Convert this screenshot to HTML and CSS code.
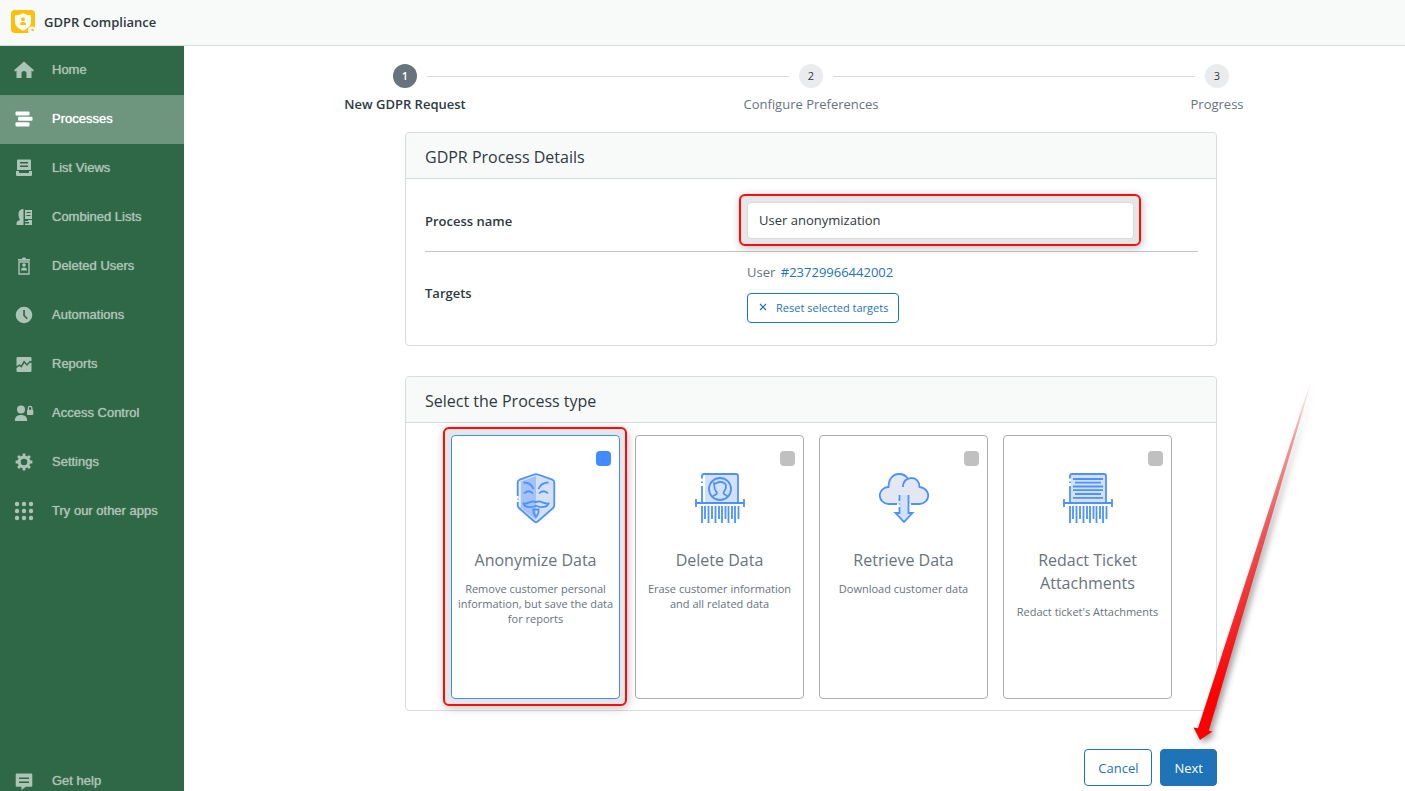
FILE: index.html
```html
<!DOCTYPE html>
<html lang="en">
<head>
    <meta charset="UTF-8">
    <meta name="viewport" content="width=device-width, initial-scale=1.0">
    <title>GDPR Compliance</title>
    <link rel="stylesheet" href="styles.css">
</head>
<body>
    <header class="topbar">
        <svg class="logo" viewBox="0 0 24 24">
            <rect width="24" height="23" rx="4" fill="#fcc107"/>
            <path d="M12 3c2 1.500 5 2.300 8 2.300v6.700c0 4-3.500 6.700-8 8.500c-4.500-1.800-8-4.500-8-8.500V5.300C7 5.300 10 4.500 12 3z" fill="#fff"/>
            <circle cx="12" cy="9.200" r="1.900" fill="#fcc107"/>
            <path d="M9 15v-1.500l1.700-1.500h2.600l1.700 1.500V15z" fill="#fcc107"/>
            <circle cx="21" cy="20.500" r="4" fill="#f8f9f9"/>
            <path d="M20.500 18.500v2.500h2.500a2.500 2.500 0 0 0-2.500-2.500z" fill="#fcc107"/>
        </svg>
        <span class="app-name">GDPR Compliance</span>
    </header>

    <div class="layout">
        <nav class="sidebar">
            <a href="#" class="nav-item">
                <svg viewBox="0 0 20 20"><path d="M10 1.500L20 10.200l-1.200 1.200-1.300-.6V18h-5v-4.500a2.500 2.500 0 0 0-5 0V18h-5v-7.200l-1.300.6L0 10.200z"/></svg>
                Home
            </a>
            <a href="#" class="nav-item active">
                <svg viewBox="0 0 20 20"><rect x="1.500" y="2.500" width="14" height="4" rx="1"/><rect x="4" y="7.800" width="14.500" height="4" rx="1"/><rect x="1.500" y="13.200" width="14" height="4.300" rx="1"/></svg>
                Processes
            </a>
            <a href="#" class="nav-item">
                <svg viewBox="0 0 20 20"><path fill-rule="evenodd" d="M4 1.500h12a1 1 0 0 1 1 1V12H3V2.500a1 1 0 0 1 1-1zM6 4v1.500h8V4zm0 3.500V9h8V7.500z"/><path d="M2 13h3v2h10v-2h3v4a1 1 0 0 1-1 1H3a1 1 0 0 1-1-1z"/></svg>
                List Views
            </a>
            <a href="#" class="nav-item">
                <svg viewBox="0 0 20 20"><path d="M9.500 2v16H2.500v-1.800c0-1.700 1.500-2.500 3.500-3.200C5 11 4.500 9.500 4.500 7c0-3 2-5 5-5z"/><path fill-rule="evenodd" d="M11 3h7v9h-7zM12.500 5v1h4V5zm0 3v1h4V8z"/><path d="M11 14h3v-1h4v5h-7v-1.500h4V15h-4z"/></svg>
                Combined Lists
            </a>
            <a href="#" class="nav-item">
                <svg viewBox="0 0 20 20"><path d="M4 3h4l.7-1.500h2.600L12 3h4v1.700H4z"/><path d="M5 6h10v12H5z" fill="none" stroke="currentColor" stroke-width="1.400"/><circle cx="10" cy="9" r="1.800"/><path d="M7 14.500c0-2 1-3 3-3s3 1 3 3z"/></svg>
                Deleted Users
            </a>
            <a href="#" class="nav-item">
                <svg viewBox="0 0 20 20"><path fill-rule="evenodd" d="M10 1.700a8.300 8.300 0 1 0 0 16.600a8.300 8.300 0 0 0 0-16.600zM9.200 5h1.700v5.200l2.900 3-1.200 1.100-3.400-3.500z"/></svg>
                Automations
            </a>
            <a href="#" class="nav-item">
                <svg viewBox="0 0 20 20"><path d="M3.500 3h13a1 1 0 0 1 1 1v3.200L15.800 6.700 13 10l-3-3.500-3 5-1.500-1.200-3 2V4a1 1 0 0 1 1-1z"/><path d="M2.500 14l3-2 2 1.700L10.300 9 13 12l3-3.500 1.500.5v8a1 1 0 0 1-1 1h-13a1 1 0 0 1-1-1z"/></svg>
                Reports
            </a>
            <a href="#" class="nav-item">
                <svg viewBox="0 0 20 20"><circle cx="7" cy="6.500" r="4"/><path d="M.8 18c0-4 2.200-6 6.200-6s6.200 2 6.200 6z"/><rect x="13" y="6.800" width="6.300" height="5.200" rx=".8"/><path d="M14.300 7V5.200a1.800 1.800 0 0 1 3.600 0V7" fill="none" stroke="currentColor" stroke-width="1.300"/></svg>
                Access Control
            </a>
            <a href="#" class="nav-item">
                <svg viewBox="0 0 20 20"><circle cx="10" cy="10" r="4.900" fill="none" stroke="currentColor" stroke-width="3.200"/><path d="M10 1.600v3M10 15.400v3M1.600 10h3M15.400 10h3M4.060 4.060l2 2M13.940 13.940l2 2M4.060 15.940l2-2M13.940 6.060l2-2" stroke="currentColor" stroke-width="2.800"/></svg>
                Settings
            </a>
            <a href="#" class="nav-item">
                <svg viewBox="0 0 20 20"><circle cx="3" cy="3" r="2.200"/><circle cx="10" cy="3" r="2.200"/><circle cx="17" cy="3" r="2.200"/><circle cx="3" cy="10" r="2.200"/><circle cx="10" cy="10" r="2.200"/><circle cx="17" cy="10" r="2.200"/><circle cx="3" cy="17" r="2.200"/><circle cx="10" cy="17" r="2.200"/><circle cx="17" cy="17" r="2.200"/></svg>
                Try our other apps
            </a>
            <a href="#" class="nav-item help">
                <svg viewBox="0 0 20 20"><path fill-rule="evenodd" d="M2.700 2.500h14.600a1 1 0 0 1 1 1v11.300a1 1 0 0 1-1 1h-5.500L7.500 19v-3.200H2.700a1 1 0 0 1-1-1V3.500a1 1 0 0 1 1-1zM5 6.500V8h10V6.500zm0 4V12h10v-1.500z"/></svg>
                Get help
            </a>
        </nav>

        <main class="content">
            <div class="stepper">
                <div class="step current">
                    <span class="step-number">1</span>
                    <span class="step-label">New GDPR Request</span>
                </div>
                <div class="step-line"></div>
                <div class="step">
                    <span class="step-number">2</span>
                    <span class="step-label">Configure Preferences</span>
                </div>
                <div class="step-line"></div>
                <div class="step">
                    <span class="step-number">3</span>
                    <span class="step-label">Progress</span>
                </div>
            </div>

            <form class="request-form">
                <section class="card">
                    <h2>GDPR Process Details</h2>
                    <div class="details">
                        <div class="row">
                            <label for="processName">Process name</label>
                            <div class="highlight">
                                <input type="text" id="processName" name="processName" value="User anonymization">
                            </div>
                        </div>
                        <div class="row">
                            <span class="row-title">Targets</span>
                            <div class="targets">
                                <div class="target">User <a href="#">#23729966442002</a></div>
                                <button type="button" class="btn btn-small">
                                    <svg viewBox="0 0 8 8"><path d="M1 1l6 6M7 1L1 7" stroke="currentColor" stroke-width="1.200"/></svg>
                                    Reset selected targets
                                </button>
                            </div>
                        </div>
                    </div>
                </section>

                <section class="card">
                    <h2>Select the Process type</h2>
                    <div class="types">
                        <div class="highlight">
                            <label class="tile selected">
                                <input type="checkbox" name="type" value="anonymize" checked>
                                <svg viewBox="0 0 50 50">
                                    <path d="M25 1L43 7v27L25 49 7 34V7z" fill="#d4e1f4"/>
                                    <path d="M25 3v44L9 34V9z" fill="#a4c2f7"/>
                                    <path d="M6.700 23V9.500Q6.700 7.300 8.700 6.600L23 1.500q2-.8 4 0l14.300 5.100q2 .7 2 2.900V32q0 2-1.500 3.300L27 48.300q-2 1.500-4 0L8.200 35.300Q6.700 34 6.700 32v-3M6.700 25.700v.8" class="line"/>
                                    <path d="M9 8.500V34" stroke="#fff" stroke-width="1.200"/>
                                    <path d="M12.500 9.500c5 0 8.500 2.500 10 6.500M37.500 9.500c-5 0-8.500 2.500-10 6.500M13 20.500c2.500-3 6.500-3 9 0M28 20.500c2.500-3 6.500-3 9 0" class="line"/>
                                    <path d="M12.500 30.500c5 .5 7-2.500 10.500-2 1 .1 2 .6 2 .6s1-.5 2-.6c3.500-.5 5.500 2.500 10.500 2-1 4-8 4.500-12.500 2.200-4.500 2.300-11.500 1.800-12.500-2.200zM22.300 36.500h5.400l-.5 4L25 44l-2.200-3.500z" class="line"/>
                                </svg>
                                <span class="tile-title">Anonymize Data</span>
                                <span class="tile-text">Remove customer personal information, but save the data for reports</span>
                            </label>
                        </div>
                        <label class="tile">
                            <input type="checkbox" name="type" value="delete">
                            <svg viewBox="0 0 50 50">
                                <path d="M10 2h32v28H10z" fill="#d4e1f4"/>
                                <path d="M7 5.500V3q0-2 2.200-2h31.600Q43 1 43 3v27M7 8.500V10M7 13v17" class="line"/>
                                <path d="M1 26v8M49 26v8M1 30h48" class="line"/>
                                <circle cx="25" cy="16" r="11" class="line"/>
                                <path d="M17.500 24c1-2.500 4.500-2 4.500-4 0-1.500-3-2.500-2.500-6l-.5-4c3 1.500 2-1 6-1s6.500 1.500 6 5c.2 3-2.500 4.500-2.500 6 0 2 3.500 1.500 4 4" class="line"/>
                                <path d="M7 33v17M13.500 33v17M20.500 33v17M27 33v17M33.500 33v17M40 33v17M10 33v13M17 33v13M24 33v13M30.500 33v13M37 33v13M43.500 33v13" class="line"/>
                            </svg>
                            <span class="tile-title">Delete Data</span>
                            <span class="tile-text">Erase customer information and all related data</span>
                        </label>
                        <label class="tile">
                            <input type="checkbox" name="type" value="retrieve">
                            <svg viewBox="0 0 50 50">
                                <path d="M10 14a10 10 0 0 1 19-8 9.500 9.500 0 0 1 11.500 8A8.500 8.500 0 0 1 40 31H10a8.500 8.500 0 0 1 0-17z" fill="#e2e7f2"/>
                                <path d="M18 31H9.500C4.500 31 .8 27 .8 22.500S4.500 14 9.500 14C9.500 6 14 1 20 1c4 0 7 1.500 9 5M24 14c0-6 4-9 8.500-9 5 0 8 4 8 9 5 .5 8.700 4 8.700 8.500S45.500 31 40.500 31H32" class="line"/>
                                <path d="M20.500 22h9v18H34l-9 9-9-9h4.500z" fill="#d4e1f4"/>
                                <path d="M20.500 28v-6M20.500 30.500v1M20.500 34v6h-4l8.500 9 8.500-9h-4V22" class="line"/>
                            </svg>
                            <span class="tile-title">Retrieve Data</span>
                            <span class="tile-text">Download customer data</span>
                        </label>
                        <label class="tile">
                            <input type="checkbox" name="type" value="redact">
                            <svg viewBox="0 0 50 50">
                                <path d="M8 2h34v28H8z" fill="#d4e1f4"/>
                                <path d="M7 5.500V3q0-2 2.200-2h31.600Q43 1 43 3v27M7 8.500V10M7 13v17" class="line"/>
                                <path d="M1 26v8M49 26v8M1 30h48" class="line"/>
                                <path d="M10 6h30M12 9.700h26M10 13.500h30M10 17.200h30M12 21h26M10 24.800h30" class="line"/>
                                <path d="M7 33v17M13.500 33v17M20.500 33v17M27 33v17M33.500 33v17M40 33v17M10 33v13M17 33v13M24 33v13M30.500 33v13M37 33v13M43.500 33v13" class="line"/>
                            </svg>
                            <span class="tile-title">Redact Ticket Attachments</span>
                            <span class="tile-text">Redact ticket's Attachments</span>
                        </label>
                    </div>
                </section>

                <div class="actions">
                    <button type="button" class="btn">Cancel</button>
                    <div class="next">
                        <button type="submit" class="btn btn-primary">Next</button>
                        <svg class="arrow" viewBox="0 0 130 369">
                            <defs>
                                <linearGradient id="fade" x1="0" y1="1" x2="0" y2="0">
                                    <stop offset="0.120" stop-color="#f00"/>
                                    <stop offset="0.550" stop-color="#ec3535" stop-opacity="0.850"/>
                                    <stop offset="0.850" stop-color="#e83030" stop-opacity="0.450"/>
                                    <stop offset="1" stop-color="#e83030" stop-opacity="0.050"/>
                                </linearGradient>
                            </defs>
                            <path d="M14 360L7.500 347.500l4.500.8L124 3l1 0L22.800 350.700l3.700.8z" fill="url(#fade)"/>
                        </svg>
                    </div>
                </div>
            </form>
        </main>
    </div>
</body>
</html>
```
FILE: styles.css
```css
* {
    margin: 0;
    padding: 0;
    box-sizing: border-box;
}
body {
    font-family: 'Open Sans', 'Noto Sans', sans-serif;
    font-size: 13px;
    line-height: 20px;
    color: #2f3941;
    background-color: #fff;
    height: 100vh;
    display: flex;
    flex-direction: column;
}
a {
    color: #1f73b7;
    text-decoration: none;
}
.topbar {
    display: flex;
    align-items: center;
    gap: 9px;
    padding: 10px 11px 11px;
    background-color: #f8f9f9;
    border-bottom: 1px solid #d8dcde;
}
.logo {
    width: 24px;
    height: 24px;
}
.app-name {
    font-weight: 600;
}
.layout {
    flex: 1;
    display: flex;
    min-height: 0;
}

/* Sidebar */
.sidebar {
    width: 184px;
    flex-shrink: 0;
    display: flex;
    flex-direction: column;
    background-color: #2f6846;
}
.nav-item {
    display: flex;
    align-items: center;
    gap: 18px;
    padding: 14px 14px 15px;
    font-family: 'Liberation Sans', Arial, sans-serif;
    color: #acc3b5;
    text-shadow: 0 0 1px currentColor;
}
.nav-item svg {
    width: 20px;
    height: 20px;
    fill: currentColor;
}
.nav-item.active {
    background-color: #6e957e;
    color: #fff;
}
.nav-item.help {
    margin-top: auto;
    padding-bottom: 0;
}

/* Content */
.content {
    flex: 1;
    padding: 18px 188px 0 221px;
}
.stepper {
    display: flex;
    margin: 0 -12px 18px;
}
.step {
    width: 24px;
    display: flex;
    flex-direction: column;
    align-items: center;
    gap: 6px;
    color: #68737d;
}
.step-number {
    width: 24px;
    height: 24px;
    border-radius: 50%;
    background-color: #e9ebed;
    color: #2f3941;
    font-size: 11px;
    line-height: 24px;
    text-align: center;
}
.step-label {
    white-space: nowrap;
}
.step-line {
    flex: 1;
    height: 1px;
    margin: 12px 10px 0;
    background-color: #d8dcde;
}
.step.current {
    color: #2f3941;
    font-weight: 600;
}
.step.current .step-number {
    background-color: #68737d;
    color: #fff;
}

.card {
    border: 1px solid #d8dcde;
    border-radius: 4px;
    margin-bottom: 30px;
}
.card h2 {
    padding: 12px 19px 9px;
    font-size: 16px;
    font-weight: 400;
    line-height: 24px;
    background-color: #f8f9f9;
    border-bottom: 1px solid #d8dcde;
    border-radius: 4px 4px 0 0;
}
.details {
    padding: 11px 18px 10px 19px;
}
.row {
    display: grid;
    grid-template-columns: 5fr 6fr 1fr;
    align-items: center;
    padding: 12px 0;
    font-weight: 600;
}
.row + .row {
    border-top: 1px solid #c2c8cc;
    padding: 10px 0 12px;
}
.row input {
    display: block;
    position: relative;
    width: 100%;
    height: 37px;
    padding: 0 12px 2px 11px;
    font: 13px 'Open Sans', 'Noto Sans', sans-serif;
    color: #2f3941;
    background-color: #fff;
    border: 1px solid #d8dcde;
    border-radius: 4px;
}
.targets {
    font-weight: 400;
    color: #68737d;
}
.target {
    margin-bottom: 11px;
}
.target a {
    margin-left: 2px;
}

/* Red callout frame around a control */
.highlight {
    position: relative;
    z-index: 0;
    display: grid;
}
.highlight::before {
    content: '';
    position: absolute;
    inset: -8px -7px -7px -8px;
    z-index: -1;
    border: 2px solid #f80c0c;
    border-radius: 6px;
    background-color: #e6e6e6;
    box-shadow: 1px 2px 8px rgba(0, 0, 0, 0.25);
}

.types {
    display: grid;
    grid-template-columns: repeat(4, 1fr);
    gap: 15px;
    padding: 12px 44px 11px 45px;
}
.tile {
    display: flex;
    flex-direction: column;
    align-items: center;
    min-height: 264px;
    padding: 15px 4px;
    text-align: center;
    color: #68737d;
    background-color: #fff;
    border: 1px solid #adadad;
    border-radius: 4px;
    cursor: pointer;
}
.tile.selected {
    border-color: #408cff;
}
.tile input {
    appearance: none;
    align-self: flex-end;
    width: 15px;
    height: 15px;
    margin-right: 4px;
    border-radius: 4px;
    background-color: #c0c0c0;
}
.tile input:checked {
    background-color: #408cff;
}
.tile svg {
    width: 50px;
    height: 50px;
    margin: 7px 0 26px;
    flex-shrink: 0;
}
.line {
    fill: none;
    stroke: #4b91ff;
    stroke-width: 1.8;
}
.tile-title {
    font-size: 16px;
    line-height: 23px;
    margin-bottom: 9px;
    padding: 0 8px;
}
.tile-text {
    font-size: 11px;
    line-height: 15px;
}

.btn {
    height: 37px;
    padding: 0 13px;
    font: 13px 'Open Sans', 'Noto Sans', sans-serif;
    color: #1f73b7;
    background-color: #fff;
    border: 1px solid #1f73b7;
    border-radius: 4px;
    cursor: pointer;
}
.btn-small {
    display: flex;
    align-items: center;
    gap: 9px;
    height: 30px;
    padding: 0 10px 2px 11px;
    font-size: 11px;
}
.btn-small svg {
    width: 8px;
    height: 8px;
}
.btn-primary {
    color: #fff;
    background-color: #1f73b7;
}
.actions {
    display: flex;
    justify-content: flex-end;
    gap: 8px;
    padding-top: 8px;
}
.next {
    position: relative;
}
.arrow {
    position: absolute;
    left: 26px;
    bottom: 100%;
    width: 130px;
    height: 369px;
    pointer-events: none;
    filter: drop-shadow(3px 3px 3px rgba(0, 0, 0, 0.4));
}
```
